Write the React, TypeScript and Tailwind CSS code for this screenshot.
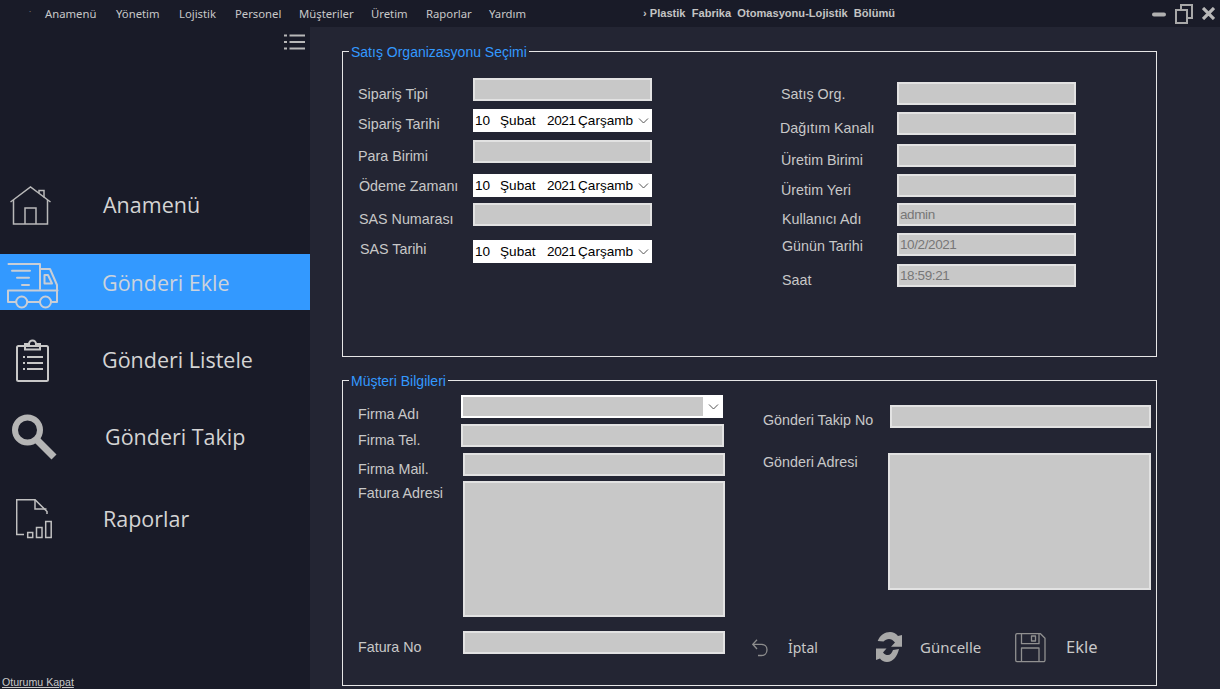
const arial = "font-['Liberation_Sans',Arial,sans-serif]";
const ui = "font-['Noto_Sans',sans-serif]";

const inputCls = 'block bg-[#c8c8c8] border-2 border-[#e2e2e2] text-[#777] text-[13.5px] tracking-[-0.4px] px-[1px] leading-none';

const Label = ({ text, className }: { text: string; className: string }) => (
  <label className={`shrink-0 text-[14.3px] leading-[15px] text-[#c8c8c8] whitespace-pre ${className}`}>{text}</label>
);

const Box = ({ value }: { value?: string }) => (
  <input readOnly value={value ?? ''} className={`${inputCls} w-[179px] h-[23px]`} />
);

const Chevron = () => (
  <svg width="11" height="6" viewBox="0 0 11 6" fill="none" stroke="#555" strokeWidth="1">
    <path d="M1 .5l4.500 4.500L10 .5" />
  </svg>
);

const DatePick = () => (
  <div className="flex items-center w-[179px] h-[23px] bg-white text-black text-[13.6px] pt-[1px] pl-[2px] shrink-0">
    <span className="w-[25px]">10</span>
    <span className="w-[47px]">Şubat</span>
    <span className="w-[31px] tracking-[-0.4px]">2021</span>
    <span className="w-[60px]">Çarşamb</span>
    <Chevron />
  </div>
);

const HomeIcon = () => (
  <svg width="41" height="39" viewBox="0 0 41 39" fill="none" stroke="#b9b9b9" strokeWidth="1.500">
    <path d="M.5 16L20.5 1l20 15" />
    <path d="M3.5 14v24h34V14" />
    <path d="M15 38V22h11v16" />
    <path d="M29 7V4.500h5v7" />
  </svg>
);

const TruckIcon = () => (
  <svg width="52" height="46" viewBox="0 0 52 46" fill="none" stroke="#c9ced6" strokeWidth="2" strokeLinecap="round" strokeLinejoin="round">
    <path d="M1.500 1H33v25" />
    <path d="M5 7.700h18M10 14.700h12M15 22h7" />
    <path d="M33 6h10l7 16v17h-5" />
    <path d="M37.500 12H41l4 8.500h-7.500z" />
    <path d="M9 39H1V27.500h49.500M20.500 39h12" />
    <circle cx="14.700" cy="39" r="5.500" />
    <circle cx="38.500" cy="39" r="5.500" />
  </svg>
);

const ClipboardIcon = () => (
  <svg width="33" height="43" viewBox="0 0 33 43" fill="none" stroke="#c8c8c8" strokeWidth="2">
    <rect x="1" y="7" width="31" height="35" rx="1.500" />
    <path d="M9 10.500V5h4a3.500 3.500 0 0 1 7 0h4v5.500z" />
    <path d="M11 18h16M11 24h16M11 30h16M7 18h2M7 24h2M7 30h2" />
  </svg>
);

const SearchIcon = () => (
  <svg width="46" height="46" viewBox="0 0 46 46" fill="none" stroke="#b5b5b5">
    <circle cx="15.500" cy="16" r="12.500" strokeWidth="6" />
    <path d="M25 26l17 17" strokeWidth="7" />
  </svg>
);

const ReportIcon = () => (
  <svg width="37" height="40" viewBox="0 0 37 40" fill="none" stroke="#c0c0c0" strokeWidth="1.500">
    <path d="M8 35.500H.700V.700H19L31 12.500V15" />
    <path d="M19 .700V10h11.500" />
    <rect x="11.700" y="33.500" width="5" height="5" />
    <rect x="20.500" y="28.500" width="5.500" height="10" />
    <rect x="29.700" y="22.500" width="5.500" height="16" />
  </svg>
);

const UndoIcon = () => (
  <svg width="19" height="18" viewBox="0 0 19 18" fill="none" stroke="#8d8d8d" strokeWidth="1.300">
    <path d="M5 .700L.800 5.300 5 10" />
    <path d="M1 5.300h8.500c3 0 5.500 2 5.500 5.500s-2.500 5.700-5.500 5.700H6" />
  </svg>
);

const RefreshIcon = () => (
  <svg width="30" height="31" viewBox="0 0 30 31" fill="#a8a8a8">
    <path d="M3.700 9C6 3 11 0 16 0c3 0 6 1.500 8 4l4-1v11.700H17l4-4.200C19 8 17 7 15 7c-2 0-4 1-5.500 2.500z" />
    <path d="M25 17c-1.500 7-6 13-12 13-3 0-5.500-1.500-7-3.500L2 28V16.500h10.500L9 20.500c1.500 2 3 2.500 5 2.500s4-2 5-5z" />
  </svg>
);

const SaveIcon = () => (
  <svg width="31" height="30" viewBox="0 0 31 30" fill="none" stroke="#909090" strokeWidth="1.300" strokeLinejoin="round">
    <path d="M2 .700h23.500l4.500 4.500v22a1.500 1.500 0 0 1-1.500 1.500H2A1.500 1.500 0 0 1 .700 27.200V2A1.500 1.500 0 0 1 2 .700z" />
    <path d="M6.500 .700v10h17.500v-10M6.500 28.700V15h17.500v13.700" />
    <rect x="16.500" y="3" width="4" height="5" />
  </svg>
);

function TopBar() {
  return (
    <header className={`flex items-center h-[27px] bg-[#191b28] text-[11.3px] text-[#c8c8c8] ${ui}`}>
      <nav className="flex mt-[1px]">
        <span className="w-[45px] pl-[29px] text-[8px] text-[#777]">·</span>
        <span className="w-[71px]">Anamenü</span>
        <span className="w-[63px]">Yönetim</span>
        <span className="w-[56px]">Lojistik</span>
        <span className="w-[64px]">Personel</span>
        <span className="w-[72px]">Müşteriler</span>
        <span className="w-[55px]">Üretim</span>
        <span className="w-[63px]">Raporlar</span>
        <span className="w-[154px]">Yardım</span>
      </nav>
      <span className={`w-[509px] -mt-[1px] text-[11.100px] font-bold text-[#c4c4c4] whitespace-pre ${arial}`}>› Plastik  Fabrika  Otomasyonu-Lojistik  Bölümü</span>
      <svg width="14" height="5" viewBox="0 0 14 5" className="mt-[1px]">
        <rect width="14" height="4" y=".5" rx="2" fill="#b0b0b0" />
      </svg>
      <svg width="18" height="20" viewBox="0 0 18 20" fill="none" stroke="#a8a8a8" strokeWidth="2" className="ml-[9px]">
        <path d="M6 6V1h11v13h-5" />
        <rect x="1" y="6" width="11" height="13" />
      </svg>
      <svg width="13" height="13" viewBox="0 0 13 13" stroke="#b8b8b8" strokeWidth="3.200" className="ml-[9px]">
        <path d="M1 1l11 11M12 1L1 12" />
      </svg>
    </header>
  );
}

function Sidebar() {
  return (
    <aside className="flex flex-col w-[310px] bg-[#191b28] text-[#d4d4d4] text-[21.500px] font-['Open_Sans',sans-serif]">
      <div className="flex justify-end pt-[7px] pr-[5px]">
        <svg width="21" height="16" viewBox="0 0 21 16" stroke="#b8b8b8" strokeWidth="2">
          <path d="M5.500 1.500H21M5.500 8H21M5.500 14.500H21" />
          <path d="M0 1.500h3M0 8h3M0 14.500h3" />
        </svg>
      </div>
      <nav className="flex flex-col mt-[127px]">
        <a className="flex items-center h-[56px] pl-[10px]">
          <HomeIcon />
          <span className="ml-[52px]">Anamenü</span>
        </a>
        <a className="flex items-center h-[56px] mt-[21px] pl-[7px] bg-[#3399ff] text-[#ccd3dc]">
          <span className="mt-[8px]"><TruckIcon /></span>
          <span className="ml-[43px] mt-[3px]">Gönderi Ekle</span>
        </a>
        <a className="flex items-center h-[56px] mt-[22px] pl-[16px]">
          <ClipboardIcon />
          <span className="ml-[53px]">Gönderi Listele</span>
        </a>
        <a className="flex items-center h-[56px] mt-[21px] pl-[12px]">
          <SearchIcon />
          <span className="ml-[47px]">Gönderi Takip</span>
        </a>
        <a className="flex items-center h-[56px] mt-[26px] pl-[16px]">
          <ReportIcon />
          <span className="ml-[50px]">Raporlar</span>
        </a>
      </nav>
      <a className={`mt-auto pl-[2px] text-[10.600px] leading-[13px] underline text-[#c8c8c8] ${arial}`}>Oturumu Kapat</a>
    </aside>
  );
}

function SalesOrg() {
  return (
    <fieldset className="h-[313px] border border-[#e6e6e6] flex">
      <legend className="ml-[6px] px-[2px] text-[14px] leading-[15px] text-[#3399ff]">
        <span className="block translate-y-[1px]">Satış Organizasyonu Seçimi</span>
      </legend>
      <div className="flex">
        <div className="w-[422px] pt-[19px]">
          <div className="flex h-[23px]">
            <Label text="Sipariş Tipi" className="w-[130px] pl-[15px] pt-[9px]" />
            <Box />
          </div>
          <div className="flex h-[23px] mt-[8px]">
            <Label text="Sipariş Tarihi" className="w-[130px] pl-[15px] pt-[8px]" />
            <DatePick />
          </div>
          <div className="flex h-[23px] mt-[8px]">
            <Label text="Para Birimi" className="w-[130px] pl-[15px] pt-[9px]" />
            <Box />
          </div>
          <div className="flex h-[23px] mt-[11px]">
            <Label text="Ödeme Zamanı" className="w-[130px] pl-[16px] pt-[5px]" />
            <DatePick />
          </div>
          <div className="flex h-[23px] mt-[6px]">
            <Label text="SAS Numarası" className="w-[130px] pl-[16px] pt-[9px]" />
            <Box />
          </div>
          <div className="flex h-[23px] mt-[14px]">
            <Label text="SAS Tarihi" className="w-[130px] pl-[17px] pt-[2px]" />
            <DatePick />
          </div>
        </div>
        <div className="pt-[23px]">
          <div className="flex h-[23px]">
            <Label text="Satış Org." className="w-[132px] pl-[16px] pt-[5px]" />
            <Box />
          </div>
          <div className="flex h-[23px] mt-[7px]">
            <Label text="Dağıtım Kanalı" className="w-[132px] pl-[15px] pt-[9px]" />
            <Box />
          </div>
          <div className="flex h-[23px] mt-[9px]">
            <Label text="Üretim Birimi" className="w-[132px] pl-[16px] pt-[9px]" />
            <Box />
          </div>
          <div className="flex h-[23px] mt-[7px]">
            <Label text="Üretim Yeri" className="w-[132px] pl-[16px] pt-[9px]" />
            <Box />
          </div>
          <div className="flex h-[23px] mt-[6px]">
            <Label text="Kullanıcı Adı" className="w-[132px] pl-[17px] pt-[9px]" />
            <Box value="admin" />
          </div>
          <div className="flex h-[23px] mt-[7px]">
            <Label text="Günün Tarihi" className="w-[132px] pl-[17px] pt-[6px]" />
            <Box value="10/2/2021" />
          </div>
          <div className="flex h-[23px] mt-[8px]">
            <Label text="Saat" className="w-[132px] pl-[17px] pt-[9px]" />
            <Box value="18:59:21" />
          </div>
        </div>
      </div>
    </fieldset>
  );
}

function Customer() {
  return (
    <fieldset className="h-[313px] mt-[16px] border border-[#e6e6e6] flex">
      <legend className="ml-[6px] px-[2px] text-[14px] leading-[15px] text-[#3399ff]">
        <span className="block translate-y-[1px]">Müşteri Bilgileri</span>
      </legend>
      <div className="flex">
        <div className="w-[405px] pt-[7px]">
          <div className="flex h-[23px]">
            <Label text="Firma Adı" className="w-[118px] pl-[15px] pt-[12px]" />
            <div className="flex items-center w-[262px] h-[23px] bg-white p-[2px] shrink-0">
              <div className="w-[240px] h-full bg-[#c8c8c8]" />
              <span className="ml-[5px]"><Chevron /></span>
            </div>
          </div>
          <div className="flex h-[23px] mt-[6px]">
            <Label text="Firma Tel." className="w-[118px] pl-[15px] pt-[9px]" />
            <input readOnly className={`${inputCls} w-[263px] h-[23px]`} />
          </div>
          <div className="flex h-[23px] mt-[6px]">
            <Label text="Firma Mail." className="w-[120px] pl-[15px] pt-[9px]" />
            <input readOnly className={`${inputCls} w-[262px] h-[23px]`} />
          </div>
          <div className="flex h-[136px] mt-[5px]">
            <Label text="Fatura Adresi" className="w-[120px] pl-[15px] pt-[5px]" />
            <textarea readOnly className={`${inputCls} w-[262px] h-[136px] resize-none`} />
          </div>
          <div className="flex h-[23px] mt-[14px]">
            <Label text="Fatura No" className="w-[120px] pl-[15px] pt-[9px]" />
            <input readOnly className={`${inputCls} w-[262px] h-[23px]`} />
          </div>
        </div>
        <div className="pt-[17px]">
          <div className="flex h-[23px]">
            <Label text="Gönderi Takip No" className="w-[142px] pl-[15px] pt-[8px]" />
            <input readOnly className={`${inputCls} w-[261px] h-[23px]`} />
          </div>
          <div className="flex h-[137px] mt-[25px]">
            <Label text="Gönderi Adresi" className="w-[140px] pl-[15px] pt-[2px]" />
            <textarea readOnly className={`${inputCls} w-[263px] h-[137px] resize-none`} />
          </div>
          <div className={`flex items-center h-[31px] mt-[42px] pl-[4px] text-[#c8c8c8] text-[15px] ${ui}`}>
            <UndoIcon />
            <span className="ml-[17px] text-[14px] w-[29px]">İptal</span>
            <span className="ml-[57px]"><RefreshIcon /></span>
            <span className="ml-[16px] w-[61px]">Güncelle</span>
            <span className="ml-[34px]"><SaveIcon /></span>
            <span className="ml-[20px] text-[16.500px]">Ekle</span>
          </div>
        </div>
      </div>
    </fieldset>
  );
}

export default function App() {
  return (
    <div className={`w-[1220px] h-[689px] overflow-hidden flex flex-col bg-[#232533] ${arial}`}>
      <TopBar />
      <div className="flex flex-1 min-h-0">
        <Sidebar />
        <main className="w-[815px] ml-[32px] pt-[17px]">
          <SalesOrg />
          <Customer />
        </main>
      </div>
    </div>
  );
}
